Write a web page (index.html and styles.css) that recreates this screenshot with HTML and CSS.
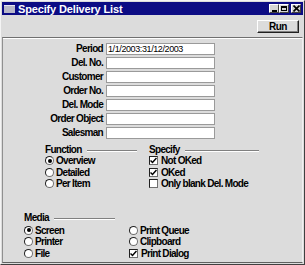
FILE: index.html
```html
<html>
<head>
<title>Specify Delivery List</title>
<link rel="stylesheet" href="styles.css">
</head>
<body>
<div class="window">
  <div class="titlebar">
    <span class="ticon"></span>
    <span class="title">Specify Delivery List</span>
    <span class="tbtns">
      <span class="tb"><span class="minbar"></span></span>
      <span class="tb"><span class="maxbox"></span></span>
      <span class="tb close">
        <svg width="7" height="7" viewBox="0 0 7 7"><path d="M0.5 0.5L6.5 6.5M6.5 0.5L0.5 6.5" stroke="#000" stroke-width="1.6"/></svg>
      </span>
    </span>
  </div>
  <div class="toolbar">
    <div class="run">Run</div>
  </div>
  <div class="panel">
    <div class="fields">
      <label>Period</label><div class="input">1/1/2003:31/12/2003</div>
      <label>Del. No.</label><div class="input"></div>
      <label>Customer</label><div class="input"></div>
      <label>Order No.</label><div class="input"></div>
      <label>Del. Mode</label><div class="input"></div>
      <label>Order Object</label><div class="input"></div>
      <label>Salesman</label><div class="input"></div>
    </div>

    <div class="groups">
      <div class="group function">
        <div class="heading">Function</div>
        <div class="opt"><span class="radio on"></span>Overview</div>
        <div class="opt"><span class="radio"></span>Detailed</div>
        <div class="opt"><span class="radio"></span>Per Item</div>
      </div>
      <div class="group specify">
        <div class="heading">Specify</div>
        <div class="opt"><span class="check"><svg width="7" height="7" viewBox="0 0 7 7"><path d="M0.5 3.5L2.5 5.5L6.5 1" fill="none" stroke="#000" stroke-width="1.5"/></svg></span>Not OKed</div>
        <div class="opt"><span class="check"><svg width="7" height="7" viewBox="0 0 7 7"><path d="M0.5 3.5L2.5 5.5L6.5 1" fill="none" stroke="#000" stroke-width="1.5"/></svg></span>OKed</div>
        <div class="opt"><span class="check"></span>Only blank Del. Mode</div>
      </div>
    </div>

    <div class="group media">
      <div class="heading">Media</div>
      <div class="mcols">
        <div class="mcol first">
          <div class="opt"><span class="radio on"></span>Screen</div>
          <div class="opt"><span class="radio"></span>Printer</div>
          <div class="opt"><span class="radio"></span>File</div>
        </div>
        <div class="mcol">
          <div class="opt"><span class="radio"></span>Print Queue</div>
          <div class="opt"><span class="radio"></span>Clipboard</div>
          <div class="opt"><span class="check"><svg width="7" height="7" viewBox="0 0 7 7"><path d="M0.5 3.5L2.5 5.5L6.5 1" fill="none" stroke="#000" stroke-width="1.5"/></svg></span>Print Dialog</div>
        </div>
      </div>
    </div>
  </div>
</div>
</body>
</html>
```

FILE: styles.css
```css
body
{
	margin:0px;
	font-family:"Liberation Sans", Arial, sans-serif;
	font-size:10px;
	color:#000000;
}
.window
{
	width:305px;
	height:265px;
	box-sizing:border-box;
	background:#dcdcdc;
	border:1px solid;
	border-color:#f4f4f4 #404040 #404040 #f4f4f4;
	padding:1px;
	display:flex;
	flex-direction:column;
}
.titlebar
{
	height:13px;
	background:#0c0c84;
	display:flex;
	align-items:center;
	color:#ffffff;
}
.ticon
{
	width:11px;
	height:7px;
	margin:0px 3px 0px 2px;
	background:#b8b8c8;
	border-top:1px solid #e8e8f0;
}
.title
{
	font-weight:bold;
	font-size:11px;
	letter-spacing:-0.15px;
	flex:1;
}
.tbtns
{
	display:flex;
	margin-right:2px;
}
.tb
{
	width:10px;
	height:9px;
	box-sizing:border-box;
	background:#d4d4d4;
	border:1px solid;
	border-color:#ffffff #404040 #404040 #ffffff;
	display:flex;
	align-items:center;
	justify-content:center;
}
.tb.close
{
	margin-left:2px;
}
.minbar
{
	width:5px;
	height:2px;
	background:#000000;
	margin-top:4px;
}
.maxbox
{
	width:6px;
	height:5px;
	box-sizing:border-box;
	border:1px solid #000000;
	border-top-width:2px;
}
.toolbar
{
	height:22px;
	display:flex;
	justify-content:flex-end;
	align-items:flex-start;
}
.run
{
	margin:5px 4px 0px 0px;
	width:42px;
	height:13px;
	box-sizing:border-box;
	background:#dcdcdc;
	border:1px solid;
	border-color:#ffffff #202020 #202020 #ffffff;
	box-shadow:inset -1px -1px 0px #808080;
	font-weight:bold;
	letter-spacing:-0.5px;
	line-height:11px;
	text-align:center;
}
.panel
{
	flex:1;
	border-top:1px solid #707070;
	border-left:1px solid #909090;
	border-bottom:1px solid #606060;
	border-right:1px solid #f0f0f0;
	box-shadow:inset 0px 1px 0px #ffffff;
}
.fields
{
	display:grid;
	grid-template-columns:100px 109px;
	column-gap:3px;
	row-gap:2px;
	padding-top:5px;
}
.fields label
{
	font-weight:bold;
	letter-spacing:-0.7px;
	text-align:right;
	line-height:12px;
}
.input
{
	height:12px;
	box-sizing:border-box;
	background:#ffffff;
	border:1px solid #9a9a9a;
	font-size:9px;
	letter-spacing:-0.4px;
	line-height:10px;
	padding-left:1px;
}
.groups
{
	display:flex;
	margin:5px 0px 0px 42px;
	gap:12px;
}
.function
{
	width:92px;
}
.specify
{
	width:110px;
}
.heading
{
	display:flex;
	align-items:center;
	font-weight:bold;
	letter-spacing:-0.7px;
	line-height:11px;
}
.heading::after
{
	content:"";
	flex:1;
	height:1px;
	background:#808080;
	border-bottom:1px solid #ffffff;
	margin:3px 0px 0px 5px;
}
.opt
{
	display:flex;
	align-items:center;
	font-weight:bold;
	letter-spacing:-0.7px;
	line-height:11.5px;
	white-space:nowrap;
}
.radio
{
	flex-shrink:0;
	width:9px;
	height:9px;
	box-sizing:border-box;
	border-radius:50%;
	background:#ffffff;
	border:1px solid;
	border-color:#202020 #707070 #707070 #202020;
	margin-right:2px;
	display:flex;
	align-items:center;
	justify-content:center;
}
.radio.on::after
{
	content:"";
	width:4px;
	height:4px;
	border-radius:50%;
	background:#000000;
}
.check
{
	flex-shrink:0;
	width:9px;
	height:9px;
	box-sizing:border-box;
	background:#ffffff;
	border:1px solid;
	border-color:#202020 #707070 #707070 #202020;
	margin-right:3px;
	display:flex;
	align-items:center;
	justify-content:center;
}
.media
{
	margin:22px 0px 0px 21px;
}
.media .heading
{
	width:91px;
	margin-bottom:2px;
}
.mcols
{
	display:flex;
}
.mcol.first
{
	width:105px;
}
```
